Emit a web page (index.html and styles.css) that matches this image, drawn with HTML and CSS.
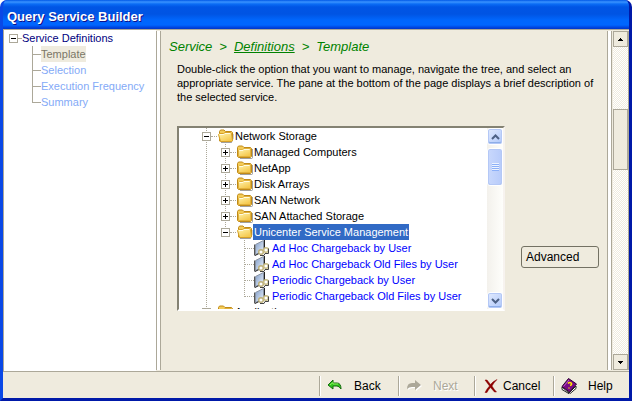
FILE: index.html
```html
<!DOCTYPE html>
<html lang="en">
<head>
    <meta charset="UTF-8">
    <meta name="viewport" content="width=device-width, initial-scale=1.0">
    <title>Query Service Builder</title>
    <link rel="stylesheet" href="styles.css">
</head>
<body>
    <!-- Shared icons -->
    <svg class="icon-defs" width="0" height="0" aria-hidden="true">
        <defs>
            <linearGradient id="folderFill" x1="0" y1="0" x2="0.6" y2="1">
                <stop offset="0" stop-color="#fff6b4"/>
                <stop offset="1" stop-color="#f5c84c"/>
            </linearGradient>
            <linearGradient id="pageFill" x1="0" y1="0" x2="1" y2="1">
                <stop offset="0" stop-color="#7f9cc8"/>
                <stop offset="1" stop-color="#eef4fc"/>
            </linearGradient>
            <symbol id="folder" viewBox="0 0 16 16">
                <path d="M3 14.5h11.5q1 0 1-1V5" fill="none" stroke="#777" stroke-opacity=".7"/>
                <path d="M.5 12.5v-9l1-1.500h4l1.500 1.500h6.500l1 1v8l-1 1h-12z" fill="#f4cc58" stroke="#c08a18"/>
                <path d="M1.500 12.500v-6l1-1h3l1.500-1h6.500v8z" fill="url(#folderFill)" stroke="#e0b03c"/>
                <path d="M2.500 6.500h3.500l1-1h5.500" fill="none" stroke="#fffce0"/>
            </symbol>
            <symbol id="folder-open" viewBox="0 0 16 16">
                <path d="M3 14.500h10.500l1.500-4V6" fill="none" stroke="#777" stroke-opacity=".7"/>
                <path d="M1.500 13v-9.500l1-1.500h3.500l1.500 1.500h6l1 1v7.500l-1 1.500z" fill="#f4cc58" stroke="#c08a18"/>
                <path d="M2.500 13.500l-2-7 1-1h4l1.500-1h5.500l1 1 1 7-1 1z" fill="url(#folderFill)" stroke="#d6a028"/>
                <path d="M2 6.500h4l1-1h5" fill="none" stroke="#fffce0"/>
            </symbol>
            <symbol id="service" viewBox="0 0 16 16">
                <path d="M1.500 4.500l8-4v10l-8 4z" fill="url(#pageFill)" stroke="#8a94a4"/>
                <path d="M10.500 0v9M1 15.500l5-2.500" fill="none" stroke="#222"/>
                <path d="M.5 4.500v11" stroke="#555"/>
                <circle cx="7" cy="12" r="2.300" fill="#fff" stroke="#bdb07a" stroke-width="1.500"/>
                <circle cx="12" cy="10" r="2.300" fill="#fff" stroke="#c8bc84" stroke-width="1.500"/>
                <path d="M6 15.500h4l1-2h3.500v-5" fill="none" stroke="#444"/>
            </symbol>
        </defs>
    </svg>

    <div class="window">
        <header class="title-bar">
            <h1>Query Service Builder</h1>
        </header>

        <div class="content">
            <nav class="steps">
                <div class="steps-root">
                    <button type="button" class="expander minus" aria-label="Collapse Service Definitions"></button>
                    <a href="#definitions">Service Definitions</a>
                </div>
                <ul>
                    <li><a href="#template" class="current">Template</a></li>
                    <li><a href="#selection">Selection</a></li>
                    <li><a href="#frequency">Execution Frequency</a></li>
                    <li><a href="#summary">Summary</a></li>
                </ul>
            </nav>
            <div class="splitter"></div>

            <main class="page">
                <div class="breadcrumb">
                    <span>Service</span>
                    <span>&gt;</span>
                    <a href="#definitions">Definitions</a>
                    <span>&gt;</span>
                    <span>Template</span>
                </div>
                <p class="intro">Double-click the option that you want to manage, navigate the tree, and select an appropriate service. The pane at the bottom of the page displays a brief description of the selected service.</p>

                <div class="picker">
                    <div class="tree-box">
                        <ul class="tree">
                            <li>
                                <div class="row"><button type="button" class="expander minus" aria-label="Collapse Network Storage"></button><svg class="icon"><use href="#folder-open"/></svg><span class="label">Network Storage</span></div>
                                <ul>
                                    <li><div class="row"><button type="button" class="expander" aria-label="Expand Managed Computers"></button><svg class="icon"><use href="#folder"/></svg><span class="label">Managed Computers</span></div></li>
                                    <li><div class="row"><button type="button" class="expander" aria-label="Expand NetApp"></button><svg class="icon"><use href="#folder"/></svg><span class="label">NetApp</span></div></li>
                                    <li><div class="row"><button type="button" class="expander" aria-label="Expand Disk Arrays"></button><svg class="icon"><use href="#folder"/></svg><span class="label">Disk Arrays</span></div></li>
                                    <li><div class="row"><button type="button" class="expander" aria-label="Expand SAN Network"></button><svg class="icon"><use href="#folder"/></svg><span class="label">SAN Network</span></div></li>
                                    <li><div class="row"><button type="button" class="expander" aria-label="Expand SAN Attached Storage"></button><svg class="icon"><use href="#folder"/></svg><span class="label">SAN Attached Storage</span></div></li>
                                    <li>
                                        <div class="row"><button type="button" class="expander minus" aria-label="Collapse Unicenter Service Management"></button><svg class="icon"><use href="#folder-open"/></svg><span class="label selected">Unicenter Service Management</span></div>
                                        <ul class="services">
                                            <li><div class="row"><svg class="icon"><use href="#service"/></svg><a href="#adhoc" class="label">Ad Hoc Chargeback by User</a></div></li>
                                            <li><div class="row"><svg class="icon"><use href="#service"/></svg><a href="#adhoc-old" class="label">Ad Hoc Chargeback Old Files by User</a></div></li>
                                            <li><div class="row"><svg class="icon"><use href="#service"/></svg><a href="#periodic" class="label">Periodic Chargeback by User</a></div></li>
                                            <li><div class="row"><svg class="icon"><use href="#service"/></svg><a href="#periodic-old" class="label">Periodic Chargeback Old Files by User</a></div></li>
                                        </ul>
                                    </li>
                                </ul>
                            </li>
                            <li><div class="row"><button type="button" class="expander" aria-label="Expand Applications"></button><svg class="icon"><use href="#folder"/></svg><span class="label">Applications</span></div></li>
                        </ul>
                        <div class="xp-scroll">
                            <button type="button" aria-label="Scroll up"><svg width="9" height="6" viewBox="0 0 9 6"><path d="M1 5l3.500-3.500L8 5" fill="none" stroke="#4d6185" stroke-width="2"/></svg></button>
                            <div class="xp-track">
                                <div class="xp-thumb"></div>
                            </div>
                            <button type="button" aria-label="Scroll down"><svg width="9" height="6" viewBox="0 0 9 6"><path d="M1 1l3.500 3.500L8 1" fill="none" stroke="#4d6185" stroke-width="2"/></svg></button>
                        </div>
                    </div>
                    <button type="button" class="advanced">Advanced</button>
                </div>
            </main>
            <div class="splitter"></div>

            <div class="page-scroll">
                <button type="button" aria-label="Page up"><svg width="5" height="3" viewBox="0 0 5 3"><path d="M2 0h1v1h1v1h1v1H0V2h1V1h1z"/></svg></button>
                <div class="page-track">
                    <div class="page-thumb"></div>
                </div>
                <button type="button" aria-label="Page down"><svg width="5" height="3" viewBox="0 0 5 3"><path d="M0 0h5v1H4v1H3v1H2V2H1V1H0z"/></svg></button>
            </div>
        </div>

        <footer class="actions">
            <button type="button" class="back">
                <svg width="16" height="16" viewBox="0 0 16 16"><path d="M1 7l5-5v3h4q4 0 4 6-2-3-4-3H6v3z" fill="#2fc51c" stroke="#176a10"/><path d="M3 7l3-2.500v1.500h5" fill="none" stroke="#8cf060"/></svg>
                Back
            </button>
            <button type="button" class="next" disabled>
                <svg width="16" height="16" viewBox="0 0 16 16"><path d="M2 12q0-6 5-6h3V3l6 5-6 5v-3H7q-3 0-5 2z" fill="#fff"/><path d="M1 11q0-6 5-6h3V2l6 5-6 5V9H6Q3 9 1 11z" fill="#aca899"/></svg>
                Next
            </button>
            <button type="button" class="cancel">
                <svg width="14" height="16" viewBox="0 0 14 16"><path d="M1 2l2 0 3.500 4.500Q9.500 3 13 1.500 9.500 5 8 8q2 3.500 4.500 6h-2L6.500 9.500Q4 12 3 14.500H1Q3 10.500 5.500 8z" fill="#8c0000" stroke="#8c0000" stroke-width=".5"/></svg>
                Cancel
            </button>
            <button type="button" class="help">
                <svg width="16" height="16" viewBox="0 0 16 16"><path d="M1 9l7 6 7-7v2.500L8.500 16 1 11.500z" fill="#fff" stroke="#222"/><path d="M1 8.500L7.500.500 15.500 6 8.500 14z" fill="#7a0a86" stroke="#2b0030"/><path d="M2.500 8.500L8 2" stroke="#c060cc"/><path d="M7 5.500q2-2 3.500 0 .500 1.500-1.500 2M8 9.500v1" fill="none" stroke="#ffe800" stroke-width="1.500"/></svg>
                Help
            </button>
        </footer>
    </div>
</body>
</html>
```

FILE: styles.css
```css
* {
    margin: 0;
    padding: 0;
    box-sizing: border-box;
}

body {
    font-family: "Liberation Sans", Arial, sans-serif;
    font-size: 11px;
    color: #000;
    background: #fff;
}

ul {
    list-style: none;
}

a {
    text-decoration: none;
}

button {
    font-family: inherit;
    color: inherit;
}

.icon-defs {
    position: absolute;
}

.window {
    display: flex;
    flex-direction: column;
    height: 100vh;
    overflow: hidden;
    background: #0a3fe0;
    border-radius: 7px 7px 0 0;
    border: 3px solid;
    border-top: 0;
    border-color: #0831d9 #0019a8 #0019a8 #0a48e6;
}

/* Title bar */
.title-bar {
    display: flex;
    align-items: center;
    flex: none;
    height: 29px;
    margin: 0 -3px;
    padding: 4px 7px 0;
    background: linear-gradient(#0058e6 0, #3a93ff 2px, #0a6cf5 4px, #0055e5 7px, #0054e3 14px, #0066fc 20px, #0066ff 25px, #003dd7 28px, #0038c8 29px);
}

.title-bar h1 {
    font-size: 13px;
    line-height: 16px;
    color: #fff;
    text-shadow: 1px 1px 0 #0f1089;
}

.content {
    display: flex;
    flex: 1;
    min-height: 0;
    padding-top: 1px;
    padding-bottom: 1px;
    background: #efebde;
    border-top: 1px solid #aca899;
    border-bottom: 1px solid #aca899;
}

.splitter {
    flex: none;
    width: 5px;
    background: #fff;
    border: 1px solid #aca899;
    border-width: 0 1px;
}

/* Left step list */
.steps {
    flex: none;
    width: 153px;
    padding-left: 5px;
    background: #fff;
    border-left: 1px solid #aca899;
    line-height: 16px;
    margin: -1px 0;
}

.steps a {
    color: #84aaf7;
}

.steps-root {
    display: flex;
    align-items: center;
    height: 16px;
}

.steps-root a {
    display: flex;
    align-items: center;
    color: #000080;
}

.steps-root a::before {
    content: "";
    width: 4px;
    border-top: 1px solid #aca899;
}

.steps li {
    display: flex;
    align-items: center;
    height: 16px;
    margin-left: 23px;
    background: linear-gradient(#aca899, #aca899) no-repeat 0 0 / 1px 100%;
}

.steps li:last-child {
    background-size: 1px 8px;
}

.steps li::before {
    content: "";
    width: 9px;
    border-top: 1px solid #aca899;
}

.steps .current {
    color: #7b7767;
    background: #efebde;
}

.expander {
    flex: none;
    width: 9px;
    height: 9px;
    border: 1px solid #aca899;
    background:
        linear-gradient(#000, #000) no-repeat center / 5px 1px,
        linear-gradient(#000, #000) no-repeat center / 1px 5px,
        #fff;
}

.expander.minus {
    background: linear-gradient(#000, #000) no-repeat center / 5px 1px, #fff;
}

/* Page */
.page {
    flex: 1;
    min-width: 0;
    padding: 8px 8px 0;
}

.breadcrumb {
    display: flex;
    gap: 7px;
    font-size: 13px;
    line-height: 16px;
    font-style: italic;
    color: #008200;
}

.breadcrumb a {
    color: inherit;
    text-decoration: underline;
}

.intro {
    padding-left: 8px;
    margin-top: 7px;
    line-height: 14px;
}

.picker {
    display: flex;
    align-items: center;
    gap: 16px;
    margin-top: 22px;
    padding-left: 8px;
}

.tree-box {
    display: flex;
    flex: 1;
    min-width: 0;
    height: 185px;
    overflow: hidden;
    background: #fff;
    border: 2px solid;
    border-color: #848273 #f7f3ef #fff #848273;
}

.tree {
    flex: 1;
    min-width: 0;
    padding-left: 23px;
    line-height: 16px;
    white-space: nowrap;
}

.tree li {
    background: repeating-linear-gradient(#aca899 0 1px, transparent 1px 2px) no-repeat 4px 0 / 1px 100%;
}

.tree ul {
    margin-left: 19px;
}

.tree ul li:last-child {
    background-size: 1px 8px;
}

.row {
    display: flex;
    align-items: center;
    height: 16px;
}

.row::before {
    content: "";
    order: 1;
    width: 6px;
    border-top: 1px dotted #aca899;
}

.row .icon {
    order: 2;
    flex: none;
    width: 16px;
    height: 16px;
}

.row .label {
    order: 3;
    margin-left: 1px;
    padding-right: 1px;
}

.services .row {
    padding-left: 4px;
}

.services .row::before {
    width: 10px;
}

.services .label {
    margin-left: 2px;
    color: #0000ff;
}

.row .selected {
    margin-left: 0;
    padding-left: 1px;
    color: #fff;
    background: #316ac5;
}

.tree .row .expander + .icon {
    margin-left: 1px;
}

/* Tree scroll bar */
.xp-scroll {
    display: flex;
    flex-direction: column;
    flex: none;
    width: 16px;
    background: linear-gradient(to right, #f3f1ec, #fefefb);
}

.xp-scroll button {
    display: flex;
    align-items: center;
    justify-content: center;
    flex: none;
    height: 17px;
    background: linear-gradient(135deg, #e1eafe, #b0c8fa);
    border: 1px solid #fff;
    border-radius: 3px;
    box-shadow: inset 0 0 0 1px #b4c8f6, inset 0 -1px 0 1px #8eaee8;
}

.xp-track {
    flex: 1;
    padding-top: 3px;
}

.xp-thumb {
    height: 38px;
    border: 1px solid #fff;
    border-radius: 3px;
    background:
        repeating-linear-gradient(#eef4fe 0 1px, #8cb0f8 1px 2px) no-repeat center / 7px 8px,
        linear-gradient(to right, #c9d8fc, #b7cbfa);
    box-shadow: inset 0 0 0 1px #b4c8f6, inset 0 -1px 0 0 #7ba0e0;
}

.advanced {
    flex: none;
    width: 78px;
    height: 22px;
    margin-top: 76px;
    padding-left: 4px;
    font-size: 12px;
    text-align: left;
    background: #efebde;
    border: 1px solid #737163;
    border-radius: 3px;
}

/* Page scroll bar */
.page-scroll {
    display: flex;
    flex-direction: column;
    flex: none;
    width: 17px;
    padding-left: 1px;
    border-right: 1px solid #aca899;
}

.page-scroll button {
    display: flex;
    align-items: center;
    justify-content: center;
    flex: none;
    height: 16px;
    background: #efebde;
    border: 1px solid #aca899;
}

.page-track {
    flex: 1;
    padding-top: 62px;
    background: repeating-conic-gradient(#efebde 0 25%, #fff 0 50%) 0 0 / 2px 2px;
}

.page-thumb {
    height: 61px;
    background: #efebde;
    border: 1px solid #aca899;
}

/* Bottom buttons */
.actions {
    display: flex;
    justify-content: flex-end;
    flex: none;
    height: 26px;
    padding: 4px 0 0;
    background: #efebde;
}

.actions button {
    display: flex;
    align-items: center;
    gap: 11px;
    width: 76px;
    height: 20px;
    padding-left: 7px;
    font-size: 12px;
    background: none;
    border: 0;
    border-left: 1px solid #aca899;
    box-shadow: inset 1px 0 0 #fff;
}

.actions .back,
.actions .cancel {
    width: 79px;
}

.actions .next {
    color: #aca899;
    text-shadow: 1px 1px 0 #fff;
}

.actions .cancel {
    gap: 5px;
    padding-left: 9px;
}
```
